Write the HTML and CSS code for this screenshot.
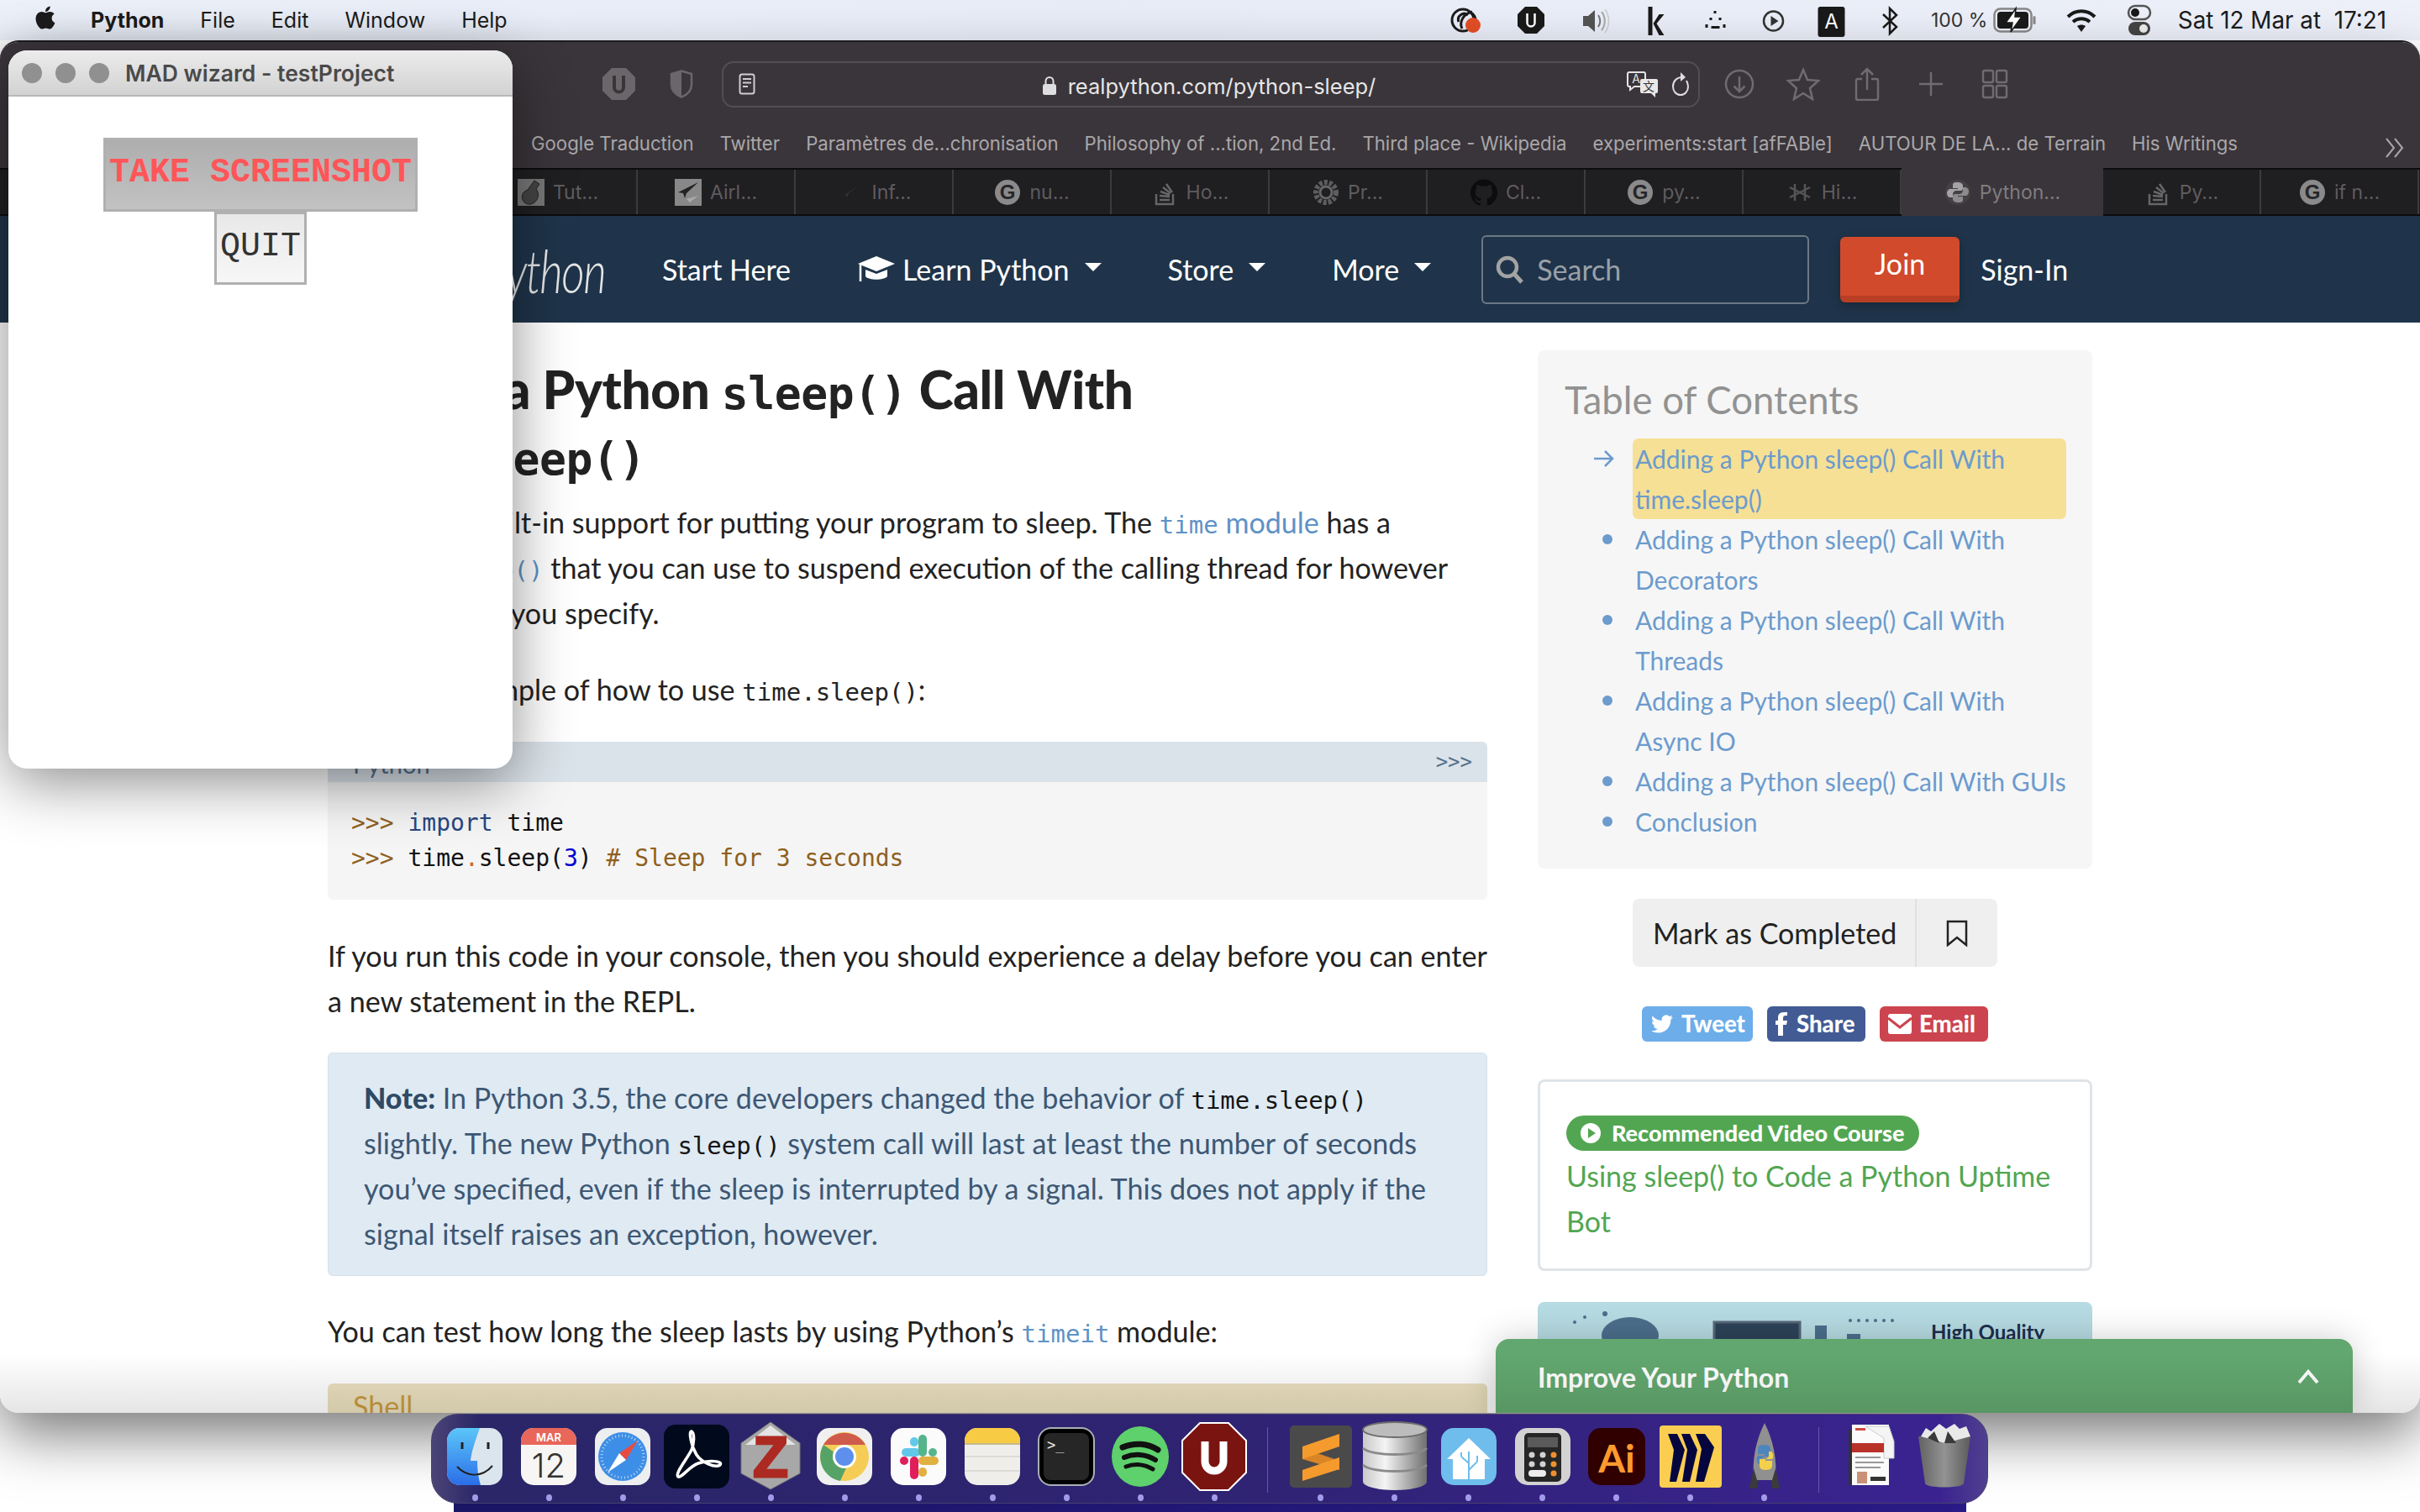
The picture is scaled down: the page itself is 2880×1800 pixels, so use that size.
FILE: index.html
```html
<!DOCTYPE html>
<html lang="en">
<head>
    <meta charset="UTF-8">
    <title>Adding a Python sleep() Call With time.sleep()</title>
    <link rel="stylesheet" href="styles.css">
</head>
<body>
    <!-- macOS menu bar -->
    <header class="menubar">
        <nav class="menu-left">
            <svg class="apple" width="36" height="40" viewBox="0 0 24 24"><path fill="#1c1c1c" d="M17.05 20.28c-.98.95-2.05.8-3.08.35-1.09-.46-2.09-.48-3.24 0-1.44.62-2.2.44-3.06-.35C2.79 15.25 3.51 7.59 9.05 7.31c1.35.07 2.29.74 3.08.8 1.18-.24 2.31-.93 3.57-.84 1.51.12 2.65.72 3.4 1.8-3.12 1.87-2.38 5.98.48 7.13-.57 1.5-1.31 2.99-2.54 4.09zM12.03 7.25c-.15-2.23 1.66-4.07 3.74-4.25.29 2.58-2.34 4.5-3.74 4.25z"/></svg>
            <b class="menu-app">Python</b>
            <span>File</span>
            <span>Edit</span>
            <span>Window</span>
            <span>Help</span>
        </nav>
        <div class="status">
            <svg width="80" height="40" viewBox="0 0 40 40"><g fill="none" stroke="#1c1c1c" stroke-width="3"><circle cx="17" cy="20" r="13"/><path d="M12 22a7 7 0 0 1 11-8M16 30c-4-8 2-18 12-20M24 10c6 2 9 7 8 13"/></g><circle cx="29" cy="26" r="9" fill="#e34f26"/></svg>
            <svg width="76" height="40" viewBox="0 0 40 40"><path fill="#1a1a1a" d="M13 4h14l9 9v14l-9 9H13l-9-9V13z"/><path fill="none" stroke="#fff" stroke-width="2.5" d="M15.5 12v11a4.5 4.5 0 0 0 9 0V12"/></svg>
            <svg width="74" height="40" viewBox="0 0 40 40"><path fill="#555" d="M7 15h6l8-7v26l-8-7H7z"/><path fill="none" stroke="#777" stroke-width="2" d="M25 14c3 4 3 10 0 14"/><path fill="none" stroke="#aaa" stroke-width="2" d="M29 10c5 6 5 16 0 22"/><path fill="none" stroke="#ccc" stroke-width="1.5" d="M33 7c6 8 6 20 0 28"/></svg>
            <svg width="73" height="40" viewBox="0 0 40 40"><path fill="#1a1a1a" d="M11 4h5v34h-5zM30 13l-9 11 9 14h-6l-7-14 7-11z"/></svg>
            <svg width="69" height="40" viewBox="0 0 40 40"><g fill="#1a1a1a"><rect x="18" y="9" width="3" height="3"/><rect x="13" y="17" width="3" height="3"/><rect x="24" y="17" width="3" height="3"/><rect x="8" y="25" width="3" height="4"/><rect x="15" y="27" width="10" height="3"/><rect x="29" y="25" width="3" height="4"/></g></svg>
            <svg width="69" height="40" viewBox="0 0 40 40"><circle cx="20" cy="21" r="11.5" fill="none" stroke="#333" stroke-width="2.5"/><path fill="#333" d="M17 15l9 6-9 6z"/></svg>
            <svg width="69" height="40" viewBox="0 0 40 40"><rect x="4" y="4" width="32" height="36" rx="3" fill="#1a1a1a"/><text x="20" y="30" class="status-a">A</text></svg>
            <svg width="70" height="40" viewBox="0 0 40 40"><path fill="none" stroke="#1a1a1a" stroke-width="2.5" d="M12 13l16 15-8 8V6l8 8-16 15"/></svg>
            <span class="battery-text">100 %</span>
            <svg class="battery" width="52" height="40" viewBox="0 0 52 40"><rect x="1.5" y="6.5" width="44" height="27" rx="7" fill="none" stroke="#888" stroke-width="2.5"/><rect x="5" y="10" width="37" height="20" rx="4" fill="#1a1a1a"/><rect x="47.5" y="15" width="3" height="10" rx="1.5" fill="#888"/><path fill="#fff" stroke="#1a1a1a" stroke-width="1.5" d="M27 6L15 23h8l-2 11 13-18h-8z"/></svg>
            <svg class="wifi" width="46" height="40" viewBox="0 0 40 40"><g fill="none" stroke="#1a1a1a" stroke-width="4"><path d="M4 16c9-9 23-9 32 0"/><path d="M10 22c6-5 14-5 20 0"/></g><path fill="#1a1a1a" d="M15 27c3-2 7-2 10 0l-5 7z"/></svg>
            <svg class="control" width="46" height="40" viewBox="0 0 40 40"><rect x="7" y="3" width="26" height="16" rx="8" fill="none" stroke="#555" stroke-width="2.5"/><circle cx="15" cy="11" r="5" fill="#1a1a1a"/><rect x="7" y="22" width="26" height="16" rx="8" fill="#444"/><circle cx="25" cy="30" r="5" fill="#eee"/></svg>
            <span class="clock">Sat 12 Mar at&nbsp; 17:21</span>
        </div>
    </header>

    <div class="wallpaper"></div>

    <!-- browser window -->
    <main class="browser">
        <div class="toolbar">
            <svg width="39" height="38" viewBox="0 0 39 38"><path fill="#6a666a" d="M11 0h17l11 11v16L28 38H11L0 27V11z"/><path fill="none" stroke="#3a353a" stroke-width="4" d="M14 9v14a5.5 5.5 0 0 0 11 0V9"/></svg>
            <svg class="shield" width="28" height="34" viewBox="0 0 28 34"><path fill="none" stroke="#6a666a" stroke-width="2.5" d="M14 1.5L26 5v13c0 7-6 12-12 14.5C8 30 2 25 2 18V5z"/><path fill="#6a666a" d="M14 1.5V32.5C8 30 2 25 2 18V5z"/></svg>
            <div class="address">
                <svg width="20" height="26" viewBox="0 0 20 26"><rect x="1.5" y="1.5" width="17" height="23" rx="2.5" fill="none" stroke="#cfcdcf" stroke-width="2"/><path stroke="#cfcdcf" stroke-width="2" d="M5 7h10M5 11.5h10M5 16h6"/></svg>
                <div class="url">
                    <svg width="18" height="24" viewBox="0 0 18 24"><rect x="1" y="10" width="16" height="13" rx="2.5" fill="#dedede"/><path fill="none" stroke="#dedede" stroke-width="2" d="M4.5 10V6.5a4.5 4.5 0 0 1 9 0V10"/></svg>
                    <span>realpython.com/python-sleep/</span>
                </div>
                <div class="address-right">
                    <svg width="38" height="32" viewBox="0 0 38 32"><path fill="#3a353a" stroke="#e4e4e4" stroke-width="2" d="M3 2h17a2 2 0 0 1 2 2v13a2 2 0 0 1-2 2H9l-5 4v-4H3a2 2 0 0 1-2-2V4a2 2 0 0 1 2-2z"/><path fill="#e8e8e8" d="M18 10h17a2 2 0 0 1 2 2v13a2 2 0 0 1-2 2h-1v5l-5-5H18a2 2 0 0 1-2-2V12a2 2 0 0 1 2-2z"/><text x="11" y="15" class="translate-a">A</text><text x="26" y="24" class="translate-b">文</text></svg>
                    <svg width="22" height="30" viewBox="0 0 22 30"><path fill="none" stroke="#dedede" stroke-width="2" d="M13 7C6 7 2 12 2 18s4 10 9 10 9-4 9-10c0-3-1-5-2-7"/><path fill="#dedede" d="M11 1l6 6-6 5z"/></svg>
                </div>
            </div>
            <div class="toolbar-right">
                <svg width="40" height="40" viewBox="0 0 40 40"><circle cx="20" cy="20" r="16" fill="none" stroke="#6f6b6f" stroke-width="2.5"/><path fill="none" stroke="#6f6b6f" stroke-width="2.5" d="M20 11v18M13.5 22.5L20 29l6.5-6.5"/></svg>
                <svg width="40" height="40" viewBox="0 0 40 40"><path fill="none" stroke="#6f6b6f" stroke-width="2.5" d="M20 3l5 12 13 1-10 9 3 13-11-7-11 7 3-13L2 16l13-1z"/></svg>
                <svg width="40" height="40" viewBox="0 0 40 40"><path fill="none" stroke="#6f6b6f" stroke-width="2.5" d="M14 13H8a2 2 0 0 0-1 2v21a2 2 0 0 0 2 2h22a2 2 0 0 0 2-2V15a2 2 0 0 0-2-2h-6M20 26V1M13 8l7-7 7 7" transform="translate(0 1)"/></svg>
                <svg width="40" height="40" viewBox="0 0 40 40"><path stroke="#6f6b6f" stroke-width="2.5" d="M20 6v28M6 20h28"/></svg>
                <svg width="40" height="40" viewBox="0 0 40 40"><g fill="none" stroke="#6f6b6f" stroke-width="2.5"><rect x="6" y="4" width="12" height="14" rx="2"/><rect x="22" y="4" width="12" height="14" rx="2"/><rect x="6" y="22" width="12" height="14" rx="2"/><rect x="22" y="22" width="12" height="14" rx="2"/></g></svg>
            </div>
        </div>

        <div class="bookmarks">
            <span>Google Traduction</span>
            <span>Twitter</span>
            <span>Paramètres de...chronisation</span>
            <span>Philosophy of ...tion, 2nd Ed.</span>
            <span>Third place - Wikipedia</span>
            <span>experiments:start [afFABle]</span>
            <span>AUTOUR DE LA... de Terrain</span>
            <span>His Writings</span>
            <svg class="more-bookmarks" width="24" height="26" viewBox="0 0 24 26"><path fill="none" stroke="#a8a5a8" stroke-width="2" d="M2 2l9 11-9 11M12 2l9 11-9 11"/></svg>
        </div>

        <div class="tabs">
            <div class="tab"></div>
            <div class="tab"></div>
            <div class="tab"></div>
            <div class="tab"><svg width="32" height="32" viewBox="0 0 32 32"><rect width="32" height="32" fill="#777"/><path fill="#444" stroke="#222" d="M20 2l6 4-4 6c4 5 3 12-2 16s-12 2-14-3 0-10 6-12z"/></svg><span>Tut...</span></div>
            <div class="tab"><svg width="32" height="32" viewBox="0 0 32 32"><rect width="32" height="32" fill="#888"/><path fill="#222" d="M4 16L28 4 14 17l-2 6-2-6z"/><path fill="#aaa" d="M14 24l14-4-10 8z"/></svg><span>Airl...</span></div>
            <div class="tab"><svg width="32" height="32" viewBox="0 0 32 32"><path fill="#333" d="M2 24L28 6 14 17l-2 5-2-4z"/></svg><span>Inf...</span></div>
            <div class="tab"><svg width="32" height="32" viewBox="0 0 32 32"><circle cx="16" cy="16" r="15" fill="#8a8a8a"/><text x="16" y="24" class="tab-g">G</text></svg><span>nu...</span></div>
            <div class="tab"><svg width="32" height="32" viewBox="0 0 32 32"><g fill="none" stroke="#666" stroke-width="2.5"><path d="M6 18v12h20V18M10 25h12M10 20l12 1M11 15l11 4M14 10l9 7M18 6l7 10"/></g></svg><span>Ho...</span></div>
            <div class="tab"><svg width="32" height="32" viewBox="0 0 32 32"><circle cx="16" cy="16" r="12" fill="none" stroke="#5e5e5e" stroke-width="6" stroke-dasharray="4 2"/><circle cx="16" cy="16" r="7" fill="none" stroke="#666" stroke-width="3"/></svg><span>Pr...</span></div>
            <div class="tab"><svg width="32" height="32" viewBox="0 0 24 24"><path fill="#0c0c0c" d="M12 .297c-6.63 0-12 5.373-12 12 0 5.303 3.438 9.8 8.205 11.385.6.113.82-.258.82-.577 0-.285-.01-1.04-.015-2.04-3.338.724-4.042-1.61-4.042-1.61C4.422 18.07 3.633 17.7 3.633 17.7c-1.087-.744.084-.729.084-.729 1.205.084 1.838 1.236 1.838 1.236 1.07 1.835 2.809 1.305 3.495.998.108-.776.417-1.305.76-1.605-2.665-.3-5.466-1.332-5.466-5.93 0-1.31.465-2.38 1.235-3.22-.135-.303-.54-1.523.105-3.176 0 0 1.005-.322 3.3 1.23.96-.267 1.98-.399 3-.405 1.02.006 2.04.138 3 .405 2.28-1.552 3.285-1.23 3.285-1.23.645 1.653.24 2.873.12 3.176.765.84 1.23 1.91 1.23 3.22 0 4.61-2.805 5.625-5.475 5.92.42.36.81 1.096.81 2.22 0 1.606-.015 2.896-.015 3.286 0 .315.21.69.825.57C20.565 22.092 24 17.592 24 12.297c0-6.627-5.373-12-12-12"/></svg><span>Cl...</span></div>
            <div class="tab"><svg width="32" height="32" viewBox="0 0 32 32"><circle cx="16" cy="16" r="15" fill="#8a8a8a"/><text x="16" y="24" class="tab-g">G</text></svg><span>py...</span></div>
            <div class="tab"><svg width="32" height="32" viewBox="0 0 32 32"><g fill="none" stroke="#555" stroke-width="2.5"><path d="M4 10l24 12M4 22l24-12M10 6v20M22 6v20"/></g></svg><span>Hi...</span></div>
            <div class="tab tab-active"><svg width="32" height="32" viewBox="0 0 32 32"><circle cx="16" cy="16" r="15" fill="#454045"/><path fill="#a5a3a5" d="M15 4c-5 0-5 2-5 4v3h6v1H7c-2 0-4 2-4 5s2 5 4 5h3v-4c0-2 2-4 4-4h5c2 0 3-1 3-3V8c0-2-2-4-7-4z"/><path fill="#8d8b8d" d="M17 28c5 0 5-2 5-4v-3h-6v-1h9c2 0 4-2 4-5s-2-5-4-5h-3v4c0 2-2 4-4 4h-5c-2 0-3 1-3 3v3c0 2 2 4 7 4z"/></svg><span>Python...</span></div>
            <div class="tab"><svg width="32" height="32" viewBox="0 0 32 32"><g fill="none" stroke="#666" stroke-width="2.5"><path d="M6 18v12h20V18M10 25h12M10 20l12 1M11 15l11 4M14 10l9 7M18 6l7 10"/></g></svg><span>Py...</span></div>
            <div class="tab"><svg width="32" height="32" viewBox="0 0 32 32"><circle cx="16" cy="16" r="15" fill="#8a8a8a"/><text x="16" y="24" class="tab-g">G</text></svg><span>if n...</span></div>
        </div>

        <div class="site-nav">
            <div class="logo-box"><a class="logo">Real Python</a></div>
            <a class="nav-start">Start Here</a>
            <a class="nav-link"><svg class="cap" width="46" height="34" viewBox="0 0 46 34"><path fill="#fff" d="M23 1L1 10l22 9 22-9z"/><path fill="#fff" d="M10 17v8c4 5 22 5 26 0v-8l-13 5z"/><path stroke="#fff" stroke-width="2.5" d="M4 11v20"/></svg>Learn Python<i class="caret"></i></a>
            <a class="nav-link nav-store">Store<i class="caret"></i></a>
            <a class="nav-link nav-more">More<i class="caret"></i></a>
            <div class="search">
                <svg width="36" height="36" viewBox="0 0 36 36"><circle cx="15" cy="15" r="11" fill="none" stroke="#a3a3a3" stroke-width="4.5"/><path stroke="#a3a3a3" stroke-width="5" d="M23 23l9 10"/></svg>
                <span>Search</span>
            </div>
            <a class="join">Join</a>
            <a class="sign-in">Sign-In</a>
        </div>

        <div class="page">
            <article class="article">
                <h1>Adding a Python <code>sleep()</code> Call With<br><code>time.sleep()</code></h1>
                <p class="intro">Python has built-in support for putting your program to sleep. The <a class="code-link">time</a> <a>module</a> has a<br>function <a class="code-link">sleep()</a> that you can use to suspend execution of the calling thread for however<br>many seconds you specify.</p>
                <p class="example">Here’s an example of how to use <code>time.sleep()</code>:</p>
                <div class="code-block">
                    <div class="code-head"><span class="code-lang">Python</span><span class="code-toggle">&gt;&gt;&gt;</span></div>
                    <pre class="code-body"><span class="prompt">&gt;&gt;&gt; </span><span class="kw">import</span> time
<span class="prompt">&gt;&gt;&gt; </span>time<span class="op">.</span>sleep(<span class="num">3</span>) <span class="prompt"># Sleep for 3 seconds</span></pre>
                </div>
                <p class="after-code">If you run this code in your console, then you should experience a delay before you can enter<br>a new statement in the REPL.</p>
                <div class="note">
                    <p><strong>Note:</strong> In Python 3.5, the core developers changed the behavior of <code>time.sleep()</code><br>slightly. The new Python <code>sleep()</code> system call will last at least the number of seconds<br>you’ve specified, even if the sleep is interrupted by a signal. This does not apply if the<br>signal itself raises an exception, however.</p>
                </div>
                <p class="after-note">You can test how long the sleep lasts by using Python’s <a class="code-link">timeit</a> module:</p>
                <div class="shell-head">Shell</div>
            </article>

            <aside class="sidebar">
                <section class="toc">
                    <h2>Table of Contents</h2>
                    <ul>
                        <li class="current"><svg class="toc-arrow" width="24" height="22" viewBox="0 0 24 22"><path fill="none" stroke="#6c9bcd" stroke-width="2.5" d="M0 11h22M13 2l9 9-9 9"/></svg><a>Adding a Python sleep() Call With<br>time.sleep()</a></li>
                        <li><a>Adding a Python sleep() Call With<br>Decorators</a></li>
                        <li><a>Adding a Python sleep() Call With<br>Threads</a></li>
                        <li><a>Adding a Python sleep() Call With<br>Async IO</a></li>
                        <li><a>Adding a Python sleep() Call With GUIs</a></li>
                        <li><a>Conclusion</a></li>
                    </ul>
                </section>

                <div class="mark-done">
                    <span class="mark-label">Mark as Completed</span>
                    <span class="mark-icon"><svg width="26" height="32" viewBox="0 0 26 32"><path fill="none" stroke="#222" stroke-width="2.5" d="M2 2h22v28l-11-9-11 9z"/></svg></span>
                </div>

                <div class="share">
                    <a class="share-tweet"><svg width="28" height="26" viewBox="0 0 24 24"><path fill="#fff" d="M23.953 4.57a10 10 0 01-2.825.775 4.958 4.958 0 002.163-2.723c-.951.555-2.005.959-3.127 1.184a4.92 4.92 0 00-8.384 4.482C7.69 8.095 4.067 6.13 1.64 3.162a4.822 4.822 0 00-.666 2.475c0 1.71.87 3.213 2.188 4.096a4.904 4.904 0 01-2.228-.616v.06a4.923 4.923 0 003.946 4.827 4.996 4.996 0 01-2.212.085 4.936 4.936 0 004.604 3.417 9.867 9.867 0 01-6.102 2.105c-.39 0-.779-.023-1.17-.067a13.995 13.995 0 007.557 2.209c9.053 0 13.998-7.496 13.998-13.985 0-.21 0-.42-.015-.63A9.935 9.935 0 0024 4.59z"/></svg>Tweet</a>
                    <a class="share-fb"><svg width="14" height="28" viewBox="0 0 14 28"><path fill="#fff" d="M9 28V15h4l1-5H9V7c0-2 1-3 3-3h2V0h-4C5 0 3 3 3 6v4H0v5h3v13z"/></svg>Share</a>
                    <a class="share-mail"><svg width="28" height="28" viewBox="0 0 28 28"><rect y="2" width="28" height="24" rx="3" fill="#fff"/><path fill="none" stroke="#cc444f" stroke-width="3" d="M0 7l14 11L28 7"/></svg>Email</a>
                </div>

                <section class="course">
                    <span class="course-pill"><svg width="26" height="26" viewBox="0 0 26 26"><circle cx="13" cy="13" r="12" fill="#fff"/><path fill="#52a651" d="M10 7l9 6-9 6z"/></svg>Recommended Video Course</span>
                    <a class="course-link">Using sleep() to Code a Python Uptime<br>Bot</a>
                </section>

                <div class="ad">
                    <svg width="300" height="50" viewBox="0 0 300 50"><g fill="#4b6f8c"><circle cx="14" cy="24" r="2"/><circle cx="26" cy="18" r="2"/><circle cx="50" cy="14" r="3"/><ellipse cx="80" cy="40" rx="34" ry="22"/></g><rect x="180" y="24" width="102" height="30" fill="#2d4358" stroke="#56687a" stroke-width="3"/></svg>
                    <svg width="100" height="50" viewBox="0 0 100 50"><g fill="#4b6f8c"><rect x="0" y="28" width="14" height="20"/><rect x="38" y="38" width="16" height="12"/><circle cx="42" cy="22" r="2"/><circle cx="52" cy="22" r="2"/><circle cx="62" cy="22" r="2"/><circle cx="72" cy="22" r="2"/><circle cx="82" cy="22" r="2"/><circle cx="92" cy="22" r="2"/></g></svg>
                    <span class="ad-title">High Quality</span>
                </div>
            </aside>
        </div>

        <div class="improve">
            <span>Improve Your Python</span>
            <svg width="26" height="18" viewBox="0 0 26 18"><path fill="none" stroke="#fff" stroke-width="4" d="M2 16L13 3l11 13"/></svg>
        </div>
        <div class="dock-shade"></div>
    </main>

    <!-- floating python app window -->
    <section class="wizard">
        <div class="wizard-title">
            <i></i><i></i><i></i>
            <span>MAD wizard - testProject</span>
        </div>
        <div class="wizard-body">
            <button class="take">TAKE SCREENSHOT</button>
            <button class="quit">QUIT</button>
        </div>
    </section>

    <!-- dock -->
    <footer class="dock">
        <div class="dock-item">
            <svg width="84" height="84" viewBox="0 0 84 84"><defs><linearGradient id="finderBlue" x1="0" y1="0" x2="0" y2="1"><stop offset="0" stop-color="#5cc6f8"/><stop offset="1" stop-color="#2b6ee8"/></linearGradient></defs><rect x="9" y="8" width="66" height="68" rx="15" fill="#dbe5ee"/><path fill="url(#finderBlue)" d="M24 8h24c-5 14-10 28-11 39h8c0 10 1 20 4 29H24A15 15 0 0 1 9 61V23A15 15 0 0 1 24 8z"/><path fill="none" stroke="#222" stroke-width="2" d="M21 54c12 13 30 13 42-1"/><path stroke="#222" stroke-width="3" d="M27 25v8M58 25v8"/></svg>
            <i class="dot"></i>
        </div>
        <div class="dock-item">
            <svg width="84" height="84" viewBox="0 0 84 84"><rect x="9" y="8" width="66" height="68" rx="15" fill="#f7f6f4"/><path fill="#e8665a" d="M24 8h36a15 15 0 0 1 15 15v5H9v-5A15 15 0 0 1 24 8z"/><text x="42" y="24" class="cal-month">MAR</text><text x="42" y="67" class="cal-day">12</text></svg>
            <i class="dot"></i>
        </div>
        <div class="dock-item">
            <svg width="84" height="84" viewBox="0 0 84 84"><rect x="9" y="8" width="66" height="68" rx="15" fill="#eceef0"/><circle cx="42" cy="42" r="29" fill="#3d8ee6"/><circle cx="42" cy="42" r="25" fill="none" stroke="#bcd8f5" stroke-width="3" stroke-dasharray="1 3"/><path fill="#ea4b3f" d="M60 23L38 38l8 8z"/><path fill="#fff" d="M24 61l14-23 8 8z"/></svg>
            <i class="dot"></i>
        </div>
        <div class="dock-item">
            <svg width="84" height="84" viewBox="0 0 84 84"><rect x="3" y="4" width="78" height="76" rx="14" fill="#010a1c"/><path fill="none" stroke="#fff" stroke-width="3.5" d="M20 66c-4-4 10-20 16-32 3-7 4-20 0-22-4 0 0 18 6 28 6 9 22 16 28 12 4-5-14-6-26-2-10 3-20 18-24 16z"/></svg>
            <i class="dot"></i>
        </div>
        <div class="dock-item">
            <svg width="84" height="84" viewBox="0 0 84 84"><path fill="#a8a8a8" stroke="#777" d="M42 1l35 25v36L42 81 7 62V26z"/><path fill="#e4e4e4" d="M42 5l30 23H12z"/><text x="42" y="66" class="zotero-z">Z</text></svg>
            <i class="dot"></i>
        </div>
        <div class="dock-item">
            <svg width="84" height="84" viewBox="0 0 84 84"><rect x="9" y="8" width="66" height="68" rx="15" fill="#f0f0f0"/><circle cx="42" cy="42" r="29" fill="#f5cd56"/><path fill="#cf5b4d" d="M17 28a29 29 0 0 1 50 0H42z"/><path fill="#56a368" d="M17 28a29 29 0 0 0 20 43l10-22z"/><circle cx="42" cy="42" r="14" fill="#fff"/><circle cx="42" cy="42" r="11" fill="#5d8fec"/></svg>
            <i class="dot"></i>
        </div>
        <div class="dock-item">
            <svg width="84" height="84" viewBox="0 0 84 84"><rect x="9" y="8" width="66" height="68" rx="15" fill="#fbfbfb"/><g fill="none" stroke-width="10" stroke-linecap="round"><path stroke="#62c8ea" d="M27 37h12"/><path stroke="#56b48c" d="M47 21v16"/><path stroke="#e01e5a" d="M37 47v17"/><path stroke="#e0b040" d="M47 47h14"/></g><g stroke-width="10" stroke-linecap="round"><path stroke="#62c8ea" d="M37 24v1"/><path stroke="#56b48c" d="M59 37h0"/><path stroke="#e01e5a" d="M25 47h0"/><path stroke="#e0b040" d="M47 60v1"/></g></svg>
            <i class="dot"></i>
        </div>
        <div class="dock-item">
            <svg width="84" height="84" viewBox="0 0 84 84"><rect x="9" y="8" width="66" height="68" rx="15" fill="#efeeea"/><path fill="#f8cb45" d="M24 8h36a15 15 0 0 1 15 15v3H9v-3A15 15 0 0 1 24 8z"/><path stroke="#c4b98c" stroke-width="2" d="M9 27h66"/><path stroke="#dcdbd6" stroke-width="2" d="M9 42h66M9 59h66"/></svg>
            <i class="dot"></i>
        </div>
        <div class="dock-item">
            <svg width="84" height="84" viewBox="0 0 84 84"><rect x="9" y="8" width="66" height="68" rx="15" fill="#000" stroke="#a9b0b5" stroke-width="2"/><rect x="15" y="14" width="54" height="56" rx="8" fill="#262626"/><text x="19" y="34" class="term-text">&gt;_</text></svg>
            <i class="dot"></i>
        </div>
        <div class="dock-item">
            <svg width="84" height="84" viewBox="0 0 84 84"><ellipse cx="42" cy="42" rx="34" ry="36" fill="#5ed06c"/><g fill="none" stroke="#111" stroke-linecap="round"><path stroke-width="7" d="M21 31c14-6 30-5 42 3"/><path stroke-width="6" d="M23 43c12-5 26-4 37 3"/><path stroke-width="5" d="M25 54c10-4 22-3 32 3"/></g></svg>
            <i class="dot"></i>
        </div>
        <div class="dock-item">
            <svg width="84" height="84" viewBox="0 0 84 84"><path fill="#7a1410" stroke="#fff" stroke-width="2" d="M25 2h34l21 21v38L59 82H25L4 61V23z"/><path fill="none" stroke="#fff" stroke-width="9" d="M31 24v24a11 11 0 0 0 22 0V24"/></svg>
            <i class="dot"></i>
        </div>
        <i class="dock-sep"></i>
        <div class="dock-item">
            <svg width="84" height="84" viewBox="0 0 84 84"><rect x="5" y="5" width="74" height="74" rx="5" fill="#4b4a4b"/><path fill="#d98526" d="M20 32l44 15v11L20 45z"/><path fill="#f59b2e" d="M20 30l44-15v15L20 45zM20 58l44-15v14L20 71z"/></svg>
            <i class="dot"></i>
        </div>
        <div class="dock-item">
            <svg width="84" height="84" viewBox="0 0 84 84"><defs><linearGradient id="dbSide" x1="0" y1="0" x2="1" y2="0"><stop offset="0" stop-color="#c8c8c8"/><stop offset=".35" stop-color="#f4f4f4"/><stop offset="1" stop-color="#6f6f6f"/></linearGradient></defs><rect x="4" y="10" width="76" height="62" fill="url(#dbSide)"/><ellipse cx="42" cy="72" rx="38" ry="10" fill="url(#dbSide)"/><ellipse cx="42" cy="10" rx="38" ry="9" fill="#bcbcbc" stroke="#6b6b6b" stroke-width="2"/><path fill="none" stroke="#8a8a8a" stroke-width="3" d="M4 32c10 10 66 10 76 0M4 52c10 10 66 10 76 0"/></svg>
            <i class="dot"></i>
        </div>
        <div class="dock-item">
            <svg width="84" height="84" viewBox="0 0 84 84"><rect x="9" y="8" width="66" height="68" rx="15" fill="#6fbdec"/><path fill="#fff" d="M42 20L16 45h7v24h38V45h7z"/><path fill="none" stroke="#6fbdec" stroke-width="2" d="M42 69V36M42 50l-9-8M42 58l10-10M33 42v-5M52 48v-7"/></svg>
            <i class="dot"></i>
        </div>
        <div class="dock-item">
            <svg width="84" height="84" viewBox="0 0 84 84"><rect x="9" y="8" width="66" height="68" rx="15" fill="#d2d2d2"/><rect x="20" y="14" width="44" height="58" rx="5" fill="#262626"/><rect x="24" y="19" width="36" height="12" fill="#5a5a5a"/><g fill="#d2d2d2"><circle cx="29" cy="40" r="3.5"/><circle cx="42" cy="40" r="3.5"/><circle cx="29" cy="51" r="3.5"/><circle cx="42" cy="51" r="3.5"/></g><g fill="#ee8f2e"><circle cx="55" cy="40" r="3.5"/><circle cx="55" cy="51" r="3.5"/><circle cx="55" cy="62" r="3.5"/></g><rect x="25" y="58" width="21" height="8" rx="4" fill="#ececec"/></svg>
            <i class="dot"></i>
        </div>
        <div class="dock-item">
            <svg width="84" height="84" viewBox="0 0 84 84"><rect x="8" y="8" width="68" height="68" rx="15" fill="#300000"/><text x="42" y="61" class="ai-text">Ai</text></svg>
            <i class="dot"></i>
        </div>
        <div class="dock-item">
            <svg width="84" height="84" viewBox="0 0 84 84"><rect x="5" y="5" width="74" height="74" rx="4" fill="#fbce52"/><path fill="#06063e" d="M15 15h11l9 19-10 38h-8l5-38zM31 15h10l9 19-9 38h-9l6-38zM48 15h11l11 16-12 41h-10l7-39z"/></svg>
            <i class="dot"></i>
        </div>
        <div class="dock-item">
            <svg width="84" height="84" viewBox="0 0 84 84"><path fill="#909090" d="M42 2c10 20 15 42 13 68H29C27 44 32 22 42 2z"/><path fill="#3b3b3b" d="M29 56L24 80h9l2-10h14l2 10h9l-5-24-4 14H33z"/><path fill="#4d86bd" d="M42 28c-8 0-8 3-8 6v5h8v2h-8c-2 2-2 8 1 10h3v-5c0-2 3-4 5-4h6V34c0-3-1-6-7-6z"/><path fill="#f3d04c" d="M43 58c7 0 8-3 8-6v-5h-8v-2h8c2-2 2-7-1-9h-3v5c0 2-3 4-5 4h-6v7c0 3 1 6 7 6z"/></svg>
            <i class="dot"></i>
        </div>
        <i class="dock-sep dock-sep-last"></i>
        <div class="dock-item">
            <svg width="84" height="84" viewBox="0 0 84 84"><rect x="16" y="10" width="6" height="66" fill="#333"/><rect x="20" y="4" width="44" height="72" fill="#fbfbfb"/><path fill="#f4f4f4" stroke="#ccc" d="M36 6h28l6 18v20H58V20z"/><rect x="20" y="26" width="38" height="11" fill="#b9322a"/><g fill="#999"><rect x="24" y="42" width="30" height="2"/><rect x="24" y="48" width="34" height="2"/><rect x="24" y="54" width="30" height="2"/></g><rect x="26" y="60" width="12" height="14" fill="#c99277"/><rect x="42" y="66" width="18" height="5" fill="#333"/><rect x="24" y="8" width="12" height="3" fill="#d04a42"/></svg>
        </div>
        <div class="dock-item">
            <svg width="84" height="84" viewBox="0 0 84 84"><defs><linearGradient id="binSide" x1="0" y1="0" x2="1" y2="0"><stop offset="0" stop-color="#626262"/><stop offset=".5" stop-color="#939393"/><stop offset="1" stop-color="#5b5b5b"/></linearGradient></defs><path fill="url(#binSide)" d="M11 18h62l-8 56c-1 6-45 6-46 0z"/><path fill="#e9e9e9" d="M14 18l6-10 6 4 10-9 8 6 10-6 6 6 8-3 5 12-30 8z"/><path fill="#3a3a3a" d="M22 20l8-8 6 14zM46 12l10 14-14 0z"/></svg>
        </div>
    </footer>
</body>
</html>
```
FILE: styles.css
```css
* {
    box-sizing: border-box;
}
html, body {
    margin: 0;
    width: 2880px;
    height: 1800px;
    overflow: hidden;
}
body {
    position: relative;
    background: #fff;
    font-family: 'Lato', 'Noto Sans', sans-serif;
    color: #222;
}
svg {
    display: block;
    flex: none;
}
code {
    font-family: 'DejaVu Sans Mono', monospace;
    line-height: 0;
}

/* menu bar */
.menubar {
    height: 48px;
    display: flex;
    justify-content: space-between;
    align-items: center;
    background: linear-gradient(90deg, #edf1fa, #e8ecf7 45%, #eef1fa);
    font-family: 'Inter', sans-serif;
    font-size: 25px;
    color: #1c1c1c;
}
.menu-left {
    display: flex;
    align-items: center;
    gap: 43px;
    padding-left: 36px;
}
.menu-left .apple {
    margin-top: -6px;
    margin-right: -7px;
}
.menu-app {
    font-weight: 700;
}
.status {
    width: 1176px;
    padding-right: 40px;
    display: flex;
    align-items: center;
}
.status-a {
    font-family: 'Inter', sans-serif;
    font-size: 24px;
    fill: #fff;
    text-anchor: middle;
}
.battery-text {
    margin-left: 14px;
    font-size: 23px;
    color: #333;
    white-space: nowrap;
}
.battery {
    margin-left: 7px;
}
.wifi {
    margin-left: 30px;
}
.control {
    margin-left: 23px;
}
.clock {
    margin-left: auto;
    white-space: nowrap;
    font-size: 27.8px;
}

/* wallpaper strip below the dock */
.wallpaper {
    position: absolute;
    left: 540px;
    top: 1780px;
    width: 1800px;
    height: 20px;
    background: linear-gradient(90deg, #1a1564, #2a1a85);
}

/* browser window */
.browser {
    position: absolute;
    left: 0;
    top: 48px;
    width: 2880px;
    height: 1634px;
    display: flex;
    flex-direction: column;
    overflow: hidden;
    border-radius: 22px;
    background: #fff;
    border-top: 2px solid #1d1b1e;
}
body::before {
    content: "";
    position: absolute;
    left: 0;
    top: 60px;
    width: 2880px;
    height: 1622px;
    box-shadow: 0 24px 70px rgba(0, 0, 0, 0.55);
    border-radius: 22px;
}
.toolbar {
    height: 100px;
    flex: none;
    display: flex;
    align-items: center;
    padding-left: 717px;
    background: #3a353a;
}
.shield {
    margin-left: 41px;
}
.address {
    width: 1164px;
    height: 55px;
    margin-left: 34px;
    padding: 0 10px 0 18px;
    display: flex;
    justify-content: space-between;
    align-items: center;
    border: 2.5px solid #524e52;
    border-radius: 14px;
}
.url {
    display: flex;
    align-items: center;
    gap: 13px;
    margin-left: 42px;
    padding-top: 4px;
    font-family: 'Inter', sans-serif;
    font-size: 25.5px;
    color: #e6e6e6;
    white-space: nowrap;
}
.address-right {
    display: flex;
    align-items: center;
    gap: 15px;
}
.translate-a {
    font-family: 'Inter', sans-serif;
    font-size: 14px;
    fill: #e4e4e4;
    text-anchor: middle;
}
.translate-b {
    font-family: 'Noto Sans CJK SC', sans-serif;
    font-size: 14px;
    fill: #333;
    text-anchor: middle;
}
.toolbar-right {
    display: flex;
    gap: 36px;
    margin-left: 27px;
}
.bookmarks {
    height: 50px;
    flex: none;
    padding: 0 0 10px 632px;
    display: flex;
    align-items: center;
    gap: 31px;
    background: #3a353a;
    font-family: 'Inter', sans-serif;
    font-size: 22.2px;
    color: #aaa7aa;
    white-space: nowrap;
}
.more-bookmarks {
    position: absolute;
    left: 2838px;
    top: 113px;
}
.tabs {
    height: 57px;
    flex: none;
    padding-left: 7px;
    display: flex;
    background: #1f1e21;
    border-top: 2px solid #0c0b0d;
    border-bottom: 2px solid #0c0b0d;
    font-family: 'Inter', sans-serif;
    font-size: 23px;
    color: #5f5c5f;
}
.tab {
    width: 188px;
    flex: none;
    display: flex;
    justify-content: center;
    align-items: center;
    gap: 10px;
    border-right: 2px solid #3d3a3d;
}
.tab-active {
    width: 240px;
    margin: -2px 0;
    background: #3a353a;
    border: none;
    color: #7f7c7f;
}
.tab-g {
    font-family: 'Liberation Sans', sans-serif;
    font-size: 24px;
    font-weight: 700;
    fill: #262528;
    text-anchor: middle;
}

/* site navigation */
.site-nav {
    height: 127px;
    flex: none;
    display: flex;
    align-items: center;
    background: #1f344a;
    color: #fff;
    font-size: 34px;
    white-space: nowrap;
}
.logo-box {
    width: 720px;
    text-align: right;
}
.logo {
    display: inline-block;
    font-weight: 300;
    font-style: italic;
    font-size: 72px;
    line-height: 80px;
    letter-spacing: -2px;
    color: #e6e6e6;
    transform: scaleX(0.74);
    transform-origin: right center;
}
.nav-start {
    margin-left: 68px;
}
.nav-link {
    display: flex;
    align-items: center;
    margin-left: 79px;
}
.cap {
    margin-right: 8px;
}
.caret {
    width: 0;
    height: 0;
    margin: -6px 0 0 18px;
    border-left: 10px solid transparent;
    border-right: 10px solid transparent;
    border-top: 10px solid #fff;
}
.search {
    width: 390px;
    height: 82px;
    margin-left: 60px;
    padding-left: 14px;
    display: flex;
    align-items: center;
    gap: 14px;
    border: 2.5px solid #6d7885;
    border-radius: 6px;
    color: #9aa0a8;
}
.join {
    width: 142px;
    height: 78px;
    margin-left: 37px;
    padding-bottom: 6px;
    display: flex;
    justify-content: center;
    align-items: center;
    background: #d14a2b;
    border-bottom: 8px solid #b83f24;
    border-radius: 6px;
    box-shadow: 0 4px 12px rgba(0, 0, 0, 0.25);
}
.sign-in {
    margin-left: 25px;
}

/* page content */
.page {
    flex: 1;
    min-height: 0;
    display: flex;
    padding-left: 390px;
    overflow: hidden;
    font-size: 34.1px;
    line-height: 54px;
}
.article {
    width: 1380px;
    flex: none;
    white-space: nowrap;
}
.article p {
    margin: 0;
}
.article a {
    color: #5e92c6;
}
.article code {
    font-size: 29px;
}
.article .code-link {
    font-family: 'DejaVu Sans Mono', monospace;
    font-size: 29px;
    line-height: 0;
}
h1 {
    margin: 40px 0 0;
    font-size: 62px;
    line-height: 78px;
    font-weight: 900;
    letter-spacing: -0.4px;
    color: #222;
}
.article h1 code {
    font-size: 53px;
    font-weight: 700;
}
.intro {
    padding-top: 15px;
}
.example {
    padding-top: 37px;
}
.code-block {
    margin-top: 35px;
    background: #f5f5f5;
    border-radius: 6px;
    overflow: hidden;
}
.code-head {
    height: 48px;
    padding: 0 18px 0 30px;
    display: flex;
    justify-content: space-between;
    align-items: center;
    background: #dbe3ea;
    color: #55718c;
    font-size: 29px;
}
.code-lang {
    padding-top: 6px;
}
.code-toggle {
    font-family: 'DejaVu Sans Mono', monospace;
    font-size: 24px;
}
.code-body {
    height: 140px;
    margin: 0;
    padding: 28px 28px 0;
    font-family: 'DejaVu Sans Mono', monospace;
    font-size: 28px;
    line-height: 42px;
    color: #111;
}
.prompt {
    color: #8f5f1e;
}
.kw {
    color: #28477f;
}
.op {
    color: #c96a2a;
}
.num {
    color: #0000cf;
}
.after-code {
    padding-top: 40px;
}
.note {
    height: 266px;
    margin-top: 34px;
    padding: 26px 42px 0;
    background: #dfeaf3;
    border: 1px solid #d4e2ee;
    border-radius: 6px;
    color: #3d5773;
}
.note strong {
    font-weight: 900;
    color: #2f4a66;
}
.note code {
    color: #151515;
}
.after-note {
    padding-top: 39px;
}
.shell-head {
    height: 60px;
    margin-top: 35px;
    padding: 0 30px;
    background: #eadfbe;
    border-radius: 6px 6px 0 0;
    color: #c79a3f;
}

/* sidebar */
.sidebar {
    width: 660px;
    flex: none;
    margin-left: 60px;
    display: flex;
    flex-direction: column;
    align-items: center;
    white-space: nowrap;
}
.toc {
    width: 660px;
    height: 617px;
    margin-top: 33px;
    padding: 29px 32px 0;
    background: #f6f6f6;
    border-radius: 8px;
}
.toc h2 {
    margin: 0;
    font-size: 45.5px;
    font-weight: 400;
    line-height: 60px;
    color: #929292;
}
.toc ul {
    margin: 16px 0 0;
    padding: 0 0 0 84px;
    list-style: none;
    font-size: 30px;
    line-height: 48px;
    color: #6c9bcd;
}
.toc li {
    position: relative;
}
.toc li::before {
    content: "";
    position: absolute;
    left: -39px;
    top: 18px;
    width: 12px;
    height: 12px;
    border-radius: 50%;
    background: #6c9bcd;
}
.toc li.current::before {
    display: none;
}
.toc-arrow {
    position: absolute;
    left: -49px;
    top: 13px;
}
.toc li.current a {
    display: block;
    width: 516px;
    margin-left: -3px;
    padding-left: 3px;
    background: #f6e095;
    border-radius: 7px;
}
.mark-done {
    width: 434px;
    height: 81px;
    margin-top: 36px;
    display: flex;
    align-items: center;
    background: #efefef;
    border-radius: 8px;
    font-size: 34px;
}
.mark-label {
    width: 338px;
    height: 100%;
    padding-left: 24px;
    display: flex;
    align-items: center;
    border-right: 2px solid #e0e0e0;
}
.mark-icon {
    flex: 1;
    display: flex;
    justify-content: center;
}
.share {
    margin-top: 47px;
    display: flex;
    gap: 17px;
    color: #fff;
    font-size: 27.5px;
    font-weight: 900;
    line-height: 42px;
}
.share a {
    height: 42px;
    padding: 0 10px;
    display: flex;
    align-items: center;
    gap: 9px;
    border-radius: 6px;
}
.share-tweet {
    width: 132px;
    background: #6cadea;
}
.share a.share-fb {
    width: 117px;
    gap: 11px;
    background: #425b94;
}
.share-mail {
    width: 129px;
    background: #cc444f;
}
.course {
    width: 660px;
    height: 228px;
    margin-top: 45px;
    padding: 40px 31px 0;
    border: 3px solid #dfe4e8;
    border-radius: 8px;
    color: #52a651;
}
.course-pill {
    width: 420px;
    height: 42px;
    padding-left: 16px;
    display: flex;
    align-items: center;
    gap: 12px;
    background: #52a651;
    border-radius: 21px;
    color: #fff;
    font-size: 27px;
    font-weight: 900;
}
.course-link {
    display: block;
    margin-top: 3px;
    font-size: 34px;
}
.ad {
    width: 660px;
    height: 130px;
    margin-top: 37px;
    padding: 0 20px 0 30px;
    display: flex;
    align-items: flex-start;
    background: #b6dbe2;
    border-radius: 8px 8px 0 0;
}
.ad-title {
    margin: 18px 0 0 38px;
    font-size: 24px;
    font-weight: 700;
    line-height: 36px;
    color: #1c2f4c;
}

/* sticky bar over the page */
.improve {
    position: absolute;
    left: 1780px;
    top: 1544px;
    width: 1020px;
    height: 90px;
    padding: 0 40px 0 50px;
    display: flex;
    justify-content: space-between;
    align-items: center;
    background: #62a76f;
    border-radius: 16px 16px 0 0;
    box-shadow: 0 0 40px rgba(0, 0, 0, 0.2);
    color: #fff;
    font-size: 32px;
    font-weight: 700;
}
.dock-shade {
    position: absolute;
    left: 0;
    bottom: 0;
    width: 100%;
    height: 70px;
    background: linear-gradient(rgba(0, 0, 0, 0), rgba(0, 0, 0, 0.1));
    pointer-events: none;
}

/* floating window */
.wizard {
    position: absolute;
    left: 10px;
    top: 60px;
    width: 600px;
    height: 855px;
    background: #fff;
    border-radius: 22px;
    box-shadow: 0 16px 70px rgba(0, 0, 0, 0.45);
    overflow: hidden;
}
.wizard-title {
    height: 55px;
    padding-left: 16px;
    display: flex;
    align-items: center;
    gap: 16px;
    background: linear-gradient(#ececec, #d2d2d2);
    border-bottom: 2px solid #b8b8b8;
}
.wizard-title i {
    width: 24px;
    height: 24px;
    border-radius: 50%;
    background: #909090;
}
.wizard-title span {
    margin-left: 3px;
    font-family: 'Inter', sans-serif;
    font-size: 26.5px;
    font-weight: 600;
    color: #4a4a4a;
}
.wizard-body {
    display: flex;
    flex-direction: column;
    align-items: center;
    padding-top: 49px;
}
.wizard-body button {
    padding: 0 0 5px;
    border: 3px solid #b0b0b0;
    font-family: 'Liberation Mono', monospace;
    font-size: 40px;
    white-space: nowrap;
}
.take {
    width: 374px;
    height: 88px;
    background: linear-gradient(#aeaeae, #c2c2c2);
    color: #ff5558;
    font-weight: 700;
}
.quit {
    width: 110px;
    height: 87px;
    background: linear-gradient(#e8e8e8, #f7f7f7);
    color: #333;
}

/* dock */
.dock {
    position: absolute;
    left: 513px;
    top: 1683px;
    width: 1853px;
    height: 107px;
    padding: 8px 7px 0;
    display: flex;
    background: linear-gradient(90deg, #4a4476 0, #2a2668 3%, #2f2372 50%, #3a2390 97%, #50408f 100%);
    border: 1px solid #47406f;
    border-radius: 32px;
}
.dock-item {
    width: 88px;
    flex: none;
    display: flex;
    flex-direction: column;
    align-items: center;
}
.dot {
    width: 7px;
    height: 8px;
    margin-top: 3px;
    border-radius: 50%;
    background: #a29bea;
}
.dock-sep {
    width: 2px;
    height: 78px;
    margin: 7px 19px 0;
    background: #5f58a8;
}
.dock-sep-last {
    margin: 7px 18px 0 20px;
}
.cal-month {
    font-family: 'Inter', sans-serif;
    font-size: 13px;
    font-weight: 600;
    fill: #fff;
    text-anchor: middle;
}
.cal-day {
    font-family: 'Inter', sans-serif;
    font-size: 40px;
    font-weight: 300;
    fill: #333;
    text-anchor: middle;
}
.zotero-z {
    font-family: 'Liberation Sans', sans-serif;
    font-size: 68px;
    font-weight: 700;
    fill: #ac2a22;
    stroke: #ac2a22;
    stroke-width: 3px;
    text-anchor: middle;
}
.term-text {
    font-family: 'DejaVu Sans Mono', monospace;
    font-size: 17px;
    fill: #eee;
}
.ai-text {
    font-family: 'Lato', sans-serif;
    font-size: 46px;
    font-weight: 700;
    fill: #ff9a2e;
    text-anchor: middle;
}
```
